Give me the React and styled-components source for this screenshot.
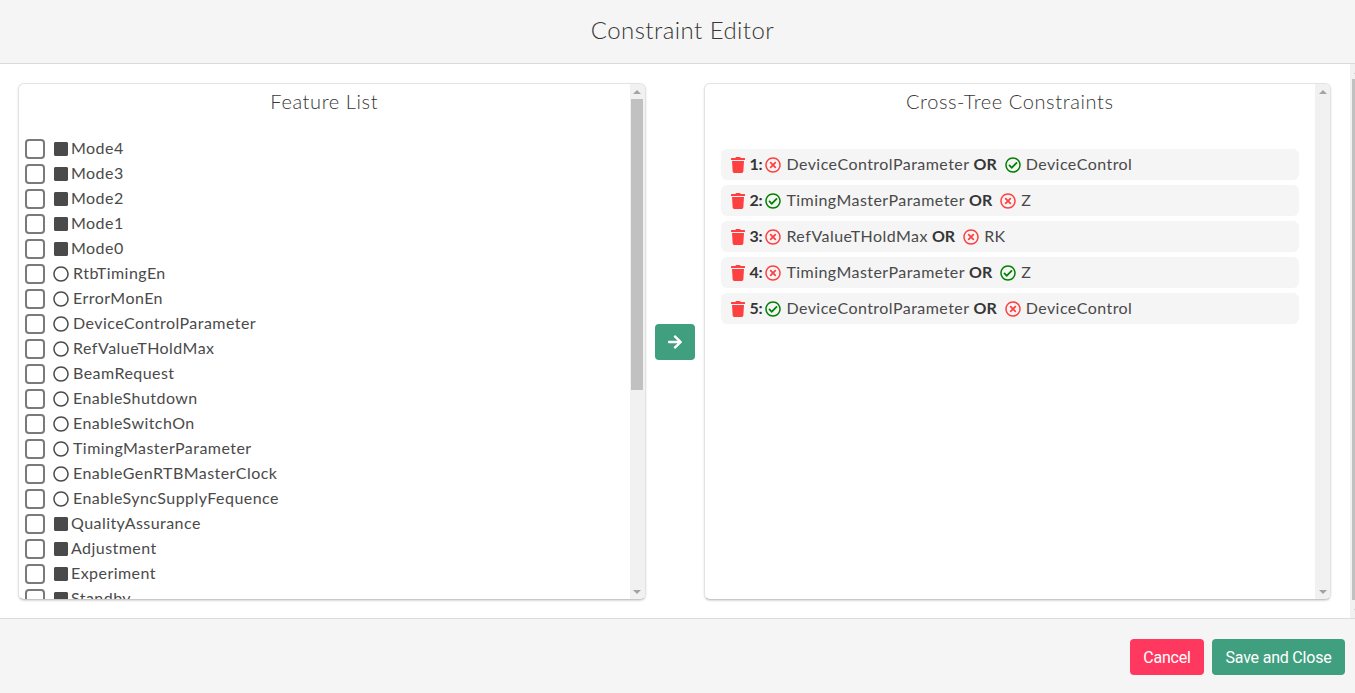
import React from "react";
import styled, { createGlobalStyle } from "styled-components";
import {
  FaArrowRight,
  FaRegCheckCircle,
  FaRegCircle,
  FaRegTimesCircle,
  FaSquare,
  FaTrash,
} from "react-icons/fa";

const features = [
  ["Mode4", "group"],
  ["Mode3", "group"],
  ["Mode2", "group"],
  ["Mode1", "group"],
  ["Mode0", "group"],
  ["RtbTimingEn", "leaf"],
  ["ErrorMonEn", "leaf"],
  ["DeviceControlParameter", "leaf"],
  ["RefValueTHoldMax", "leaf"],
  ["BeamRequest", "leaf"],
  ["EnableShutdown", "leaf"],
  ["EnableSwitchOn", "leaf"],
  ["TimingMasterParameter", "leaf"],
  ["EnableGenRTBMasterClock", "leaf"],
  ["EnableSyncSupplyFequence", "leaf"],
  ["QualityAssurance", "group"],
  ["Adjustment", "group"],
  ["Experiment", "group"],
  ["Standby", "group"],
];

const constraints = [
  { left: ["DeviceControlParameter", false], right: ["DeviceControl", true] },
  { left: ["TimingMasterParameter", true], right: ["Z", false] },
  { left: ["RefValueTHoldMax", false], right: ["RK", false] },
  { left: ["TimingMasterParameter", false], right: ["Z", true] },
  { left: ["DeviceControlParameter", true], right: ["DeviceControl", false] },
];

const GlobalStyle = createGlobalStyle`
  html, body {
    margin: 0;
    padding: 0;
    overflow: hidden;
    background: #fff;
  }
  * { box-sizing: border-box; }
`;

const Viewport = styled.div`
  height: 693px;
  overflow: hidden;
  font-family: Lato, "Open Sans", sans-serif;
  color: #4a4a4a;
`;

const Card = styled.div`
  width: calc(100% + 10px);
  display: flex;
  flex-direction: column;
`;

const Header = styled.header`
  height: 64px;
  display: flex;
  align-items: center;
  justify-content: center;
  background: #f5f5f5;
  border-bottom: 1px solid #dbdbdb;
  padding-bottom: 4px;
  font-size: 24px;
  font-weight: 300;
  letter-spacing: 0.45px;
  color: #363636;
`;

const Body = styled.section`
  height: 554px;
  display: flex;
  background: #fff;
`;

const Columns = styled.div`
  flex: 1;
  min-width: 0;
  display: grid;
  grid-template-columns: 1fr 58px 1fr;
  align-items: center;
  padding: 19px 19px 18px 18px;
`;

const Panel = styled.div`
  height: 517px;
  display: flex;
  overflow: hidden;
  background: #fff;
  border: 1px solid #e3e3e3;
  border-bottom-color: #c8c8c8;
  border-radius: 6px;
  box-shadow: 0 1px 2px rgba(10, 10, 10, 0.15);
`;

const PanelContent = styled.div`
  flex: 1;
  min-width: 0;
  overflow: hidden;
`;

const PanelTitle = styled.h2`
  margin: 0;
  height: 52px;
  padding-top: 2px;
  line-height: 30px;
  font-size: 20px;
  font-weight: 300;
  text-align: center;
  letter-spacing: 0.6px;
  color: #363636;
`;

const Track = styled.div`
  flex: none;
  width: 15px;
  display: flex;
  flex-direction: column;
  background: #f1f1f1;
`;

const TrackEnd = styled.div`
  flex: none;
  height: 15px;
  display: flex;
  align-items: center;
  justify-content: center;

  &::before {
    content: "";
    border-left: 4px solid transparent;
    border-right: 4px solid transparent;
    ${(p) => (p.$down ? "border-top" : "border-bottom")}: 4px solid #a3a3a3;
  }
`;

const TrackBody = styled.div`
  flex: 1;
  min-height: 0;
`;

const Thumb = styled.div`
  height: ${(p) => p.$height}px;
  margin: ${(p) => (p.$page ? "0 2px" : "0 2px 0 1px")};
  background: #c1c1c1;
`;

const FeatureList = styled.ul`
  list-style: none;
  margin: 0;
  padding: 0 0 0 6px;
`;

const FeatureRow = styled.li`
  height: 25px;
  display: flex;
  align-items: center;
  font-size: 16px;
  line-height: 25px;
`;

const FeatureName = styled.span`
  margin-top: -2px;
  letter-spacing: 0.45px;
`;

const Check = styled.input.attrs({ type: "checkbox" })`
  appearance: none;
  width: 20px;
  height: 20px;
  margin: 0 8px 0 0;
  border: 2px solid #7a7a7a;
  border-radius: 4px;
  background: #fff;
  flex: none;
`;

const KindIcon = styled.span`
  display: inline-flex;
  align-items: center;
  font-size: 16px;
  color: #4a4a4a;
  margin-right: ${(p) => (p.$leaf ? "4px" : "2px")};
`;

const MoveColumn = styled.div`
  display: flex;
  justify-content: center;
`;

const MoveButton = styled.button`
  width: 40px;
  height: 36px;
  display: flex;
  align-items: center;
  justify-content: center;
  padding: 0;
  border: none;
  border-radius: 4px;
  background: #409f7f;
  color: #fff;
  font-size: 16px;
`;

const ConstraintList = styled.div`
  display: flex;
  flex-direction: column;
  gap: 5px;
  margin-top: 13px;
  padding: 0 16px;
`;

const ConstraintRow = styled.div`
  height: 31px;
  display: flex;
  align-items: center;
  padding-left: 9px;
  background: #f5f5f5;
  border-radius: 6px;
  font-size: 16px;
  white-space: pre;
`;

const Trash = styled(FaTrash)`
  color: #ff4040;
  font-size: 16px;
  margin-right: 4px;
  flex: none;
`;

const Strong = styled.strong`
  margin-top: -2px;
  font-weight: 700;
  color: #363636;
`;

const Index = styled(Strong)`
  margin-right: 3px;
  letter-spacing: -0.25px;
`;

const Operator = styled(Strong)`
  margin-left: 4px;
  margin-right: 8px;
`;

const LiteralName = styled.span`
  margin-top: -2px;
  letter-spacing: 0.45px;
`;

const StateIcon = styled.span`
  display: inline-flex;
  font-size: 16px;
  margin-right: 5px;
  color: ${(p) => (p.$on ? "#008000" : "#ff4040")};
`;

const Footer = styled.footer`
  display: flex;
  justify-content: flex-end;
  gap: 8px;
  padding: 20px;
  background: #f5f5f5;
  border-top: 1px solid #dbdbdb;
`;

const ActionButton = styled.button`
  height: 36px;
  padding: 0;
  width: ${(p) => (p.$danger ? "74px" : "133px")};
  border: none;
  border-radius: 4px;
  background: ${(p) => (p.$danger ? "#ff3860" : "#409f7f")};
  color: #fff;
  font-family: Roboto, sans-serif;
  font-size: 16px;
  letter-spacing: -0.2px;
`;

const Scrollbar = ({ thumbHeight, page }) => (
  <Track>
    <TrackEnd />
    <TrackBody>{thumbHeight ? <Thumb $height={thumbHeight} $page={page} /> : null}</TrackBody>
    <TrackEnd $down />
  </Track>
);

const Literal = ({ name, on }) => (
  <>
    <StateIcon $on={on}>{on ? <FaRegCheckCircle /> : <FaRegTimesCircle />}</StateIcon>
    <LiteralName>{name}</LiteralName>
  </>
);

export default function App() {
  return (
    <Viewport>
      <GlobalStyle />
      <Card>
        <Header>Constraint Editor</Header>
        <Body>
          <Columns>
            <Panel>
              <PanelContent>
                <PanelTitle>Feature List</PanelTitle>
                <FeatureList>
                  {features.map(([name, kind]) => (
                    <FeatureRow key={name}>
                      <Check />
                      <KindIcon $leaf={kind === "leaf"}>
                        {kind === "leaf" ? <FaRegCircle /> : <FaSquare />}
                      </KindIcon>
                      <FeatureName>{name}</FeatureName>
                    </FeatureRow>
                  ))}
                </FeatureList>
              </PanelContent>
              <Scrollbar thumbHeight={291} />
            </Panel>
            <MoveColumn>
              <MoveButton aria-label="Add constraint">
                <FaArrowRight />
              </MoveButton>
            </MoveColumn>
            <Panel>
              <PanelContent>
                <PanelTitle>Cross-Tree Constraints</PanelTitle>
                <ConstraintList>
                  {constraints.map((c, i) => (
                    <ConstraintRow key={i}>
                      <Trash />
                      <Index>{i + 1}:</Index>
                      <Literal name={c.left[0]} on={c.left[1]} />
                      <Operator>OR</Operator>
                      <Literal name={c.right[0]} on={c.right[1]} />
                    </ConstraintRow>
                  ))}
                </ConstraintList>
              </PanelContent>
              <Scrollbar />
            </Panel>
          </Columns>
          <Scrollbar page thumbHeight={521} />
        </Body>
        <Footer>
          <ActionButton $danger>Cancel</ActionButton>
          <ActionButton>Save and Close</ActionButton>
        </Footer>
      </Card>
    </Viewport>
  );
}
